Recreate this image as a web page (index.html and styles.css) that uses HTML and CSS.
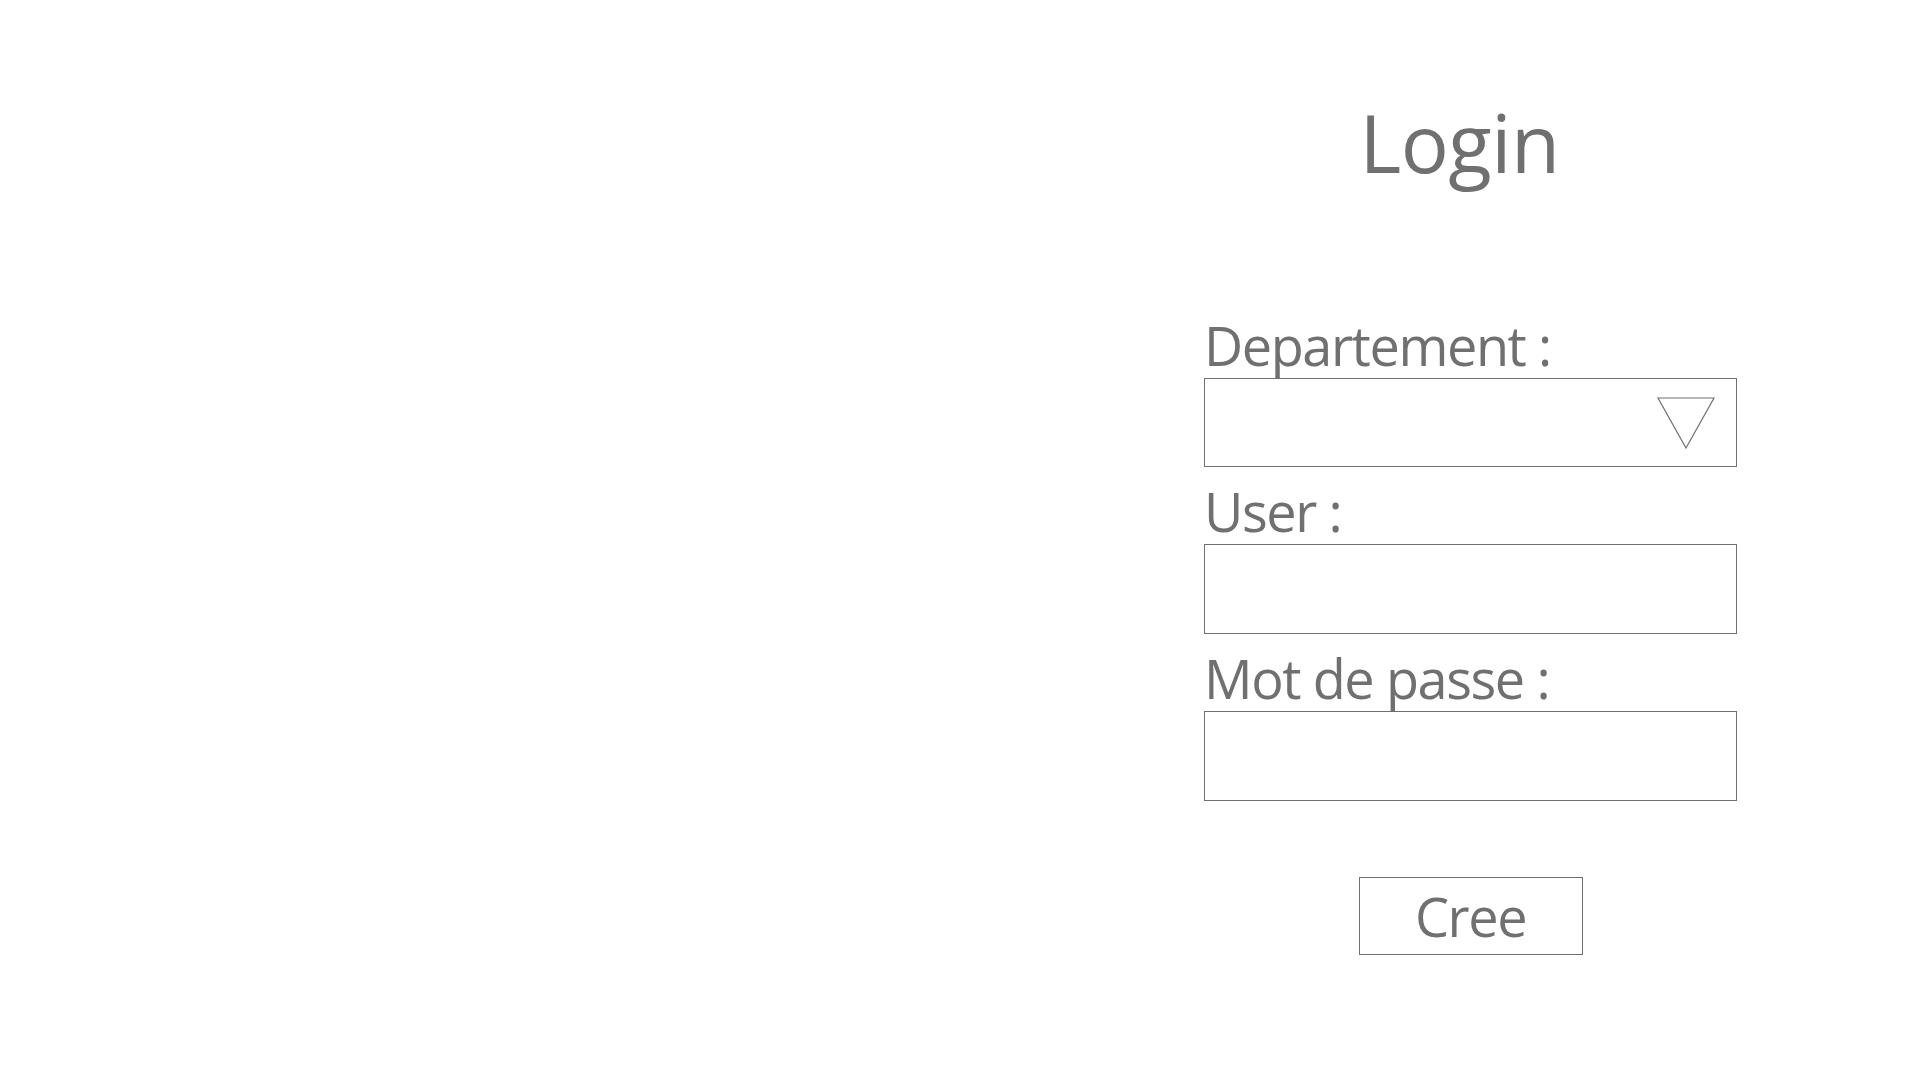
FILE: index.html
```html
<!DOCTYPE html>
<html lang="fr">
<head>
<meta charset="utf-8">
<title>Login</title>
<link rel="stylesheet" href="styles.css">
</head>
<body>
<main class="page">
  <section class="panel">
    <h1 class="title">Login</h1>
    <form class="form">
      <div class="field">
        <label class="label">Departement :</label>
        <div class="box select">
          <svg class="caret" width="58" height="52" viewBox="0 0 58 52">
            <polygon points="1,1 57,1 29,51" fill="none" stroke="#707070" stroke-width="1.2"/>
          </svg>
        </div>
      </div>
      <div class="field">
        <label class="label">User :</label>
        <div class="box"></div>
      </div>
      <div class="field">
        <label class="label">Mot de passe :</label>
        <div class="box"></div>
      </div>
      <div class="actions">
        <button type="button" class="btn">Cree</button>
      </div>
    </form>
  </section>
</main>
</body>
</html>
```

FILE: styles.css
```css
html, body {
  margin: 0;
  padding: 0;
  background: #ffffff;
}
body {
  width: 1920px;
  height: 1080px;
  overflow: hidden;
  font-family: "Open Sans", "Noto Sans", sans-serif;
  color: #707070;
}
.page {
  display: flex;
  justify-content: flex-end;
  height: 100%;
}
.panel {
  width: 533px;
  margin-right: 183px;
  padding-top: 102px;
  display: flex;
  flex-direction: column;
}
.title {
  margin: 0 22px 0 0;
  font-size: 80px;
  line-height: 80px;
  font-weight: 400;
  text-align: center;
  letter-spacing: -0.5px;
}
.form {
  margin-top: 134px;
  display: flex;
  flex-direction: column;
  gap: 15px;
}
.field {
  display: flex;
  flex-direction: column;
}
.label {
  font-size: 54px;
  line-height: 58px;
  margin-bottom: 4px;
  letter-spacing: -1.4px;
}
.box {
  height: 88px;
  border: 1px solid #707070;
  background: #ffffff;
}
.select {
  display: flex;
  align-items: flex-start;
  justify-content: flex-end;
  padding: 18px 21px 0 0;
  box-sizing: border-box;
  height: 89px;
}
.actions {
  display: flex;
  justify-content: center;
  margin-top: 61px;
}
.btn {
  width: 224px;
  height: 78px;
  border: 1px solid #707070;
  background: #ffffff;
  color: #707070;
  font-family: "Open Sans", "Noto Sans", sans-serif;
  font-size: 54px;
  line-height: 1;
  padding: 0;
  letter-spacing: -1.4px;
}
```
